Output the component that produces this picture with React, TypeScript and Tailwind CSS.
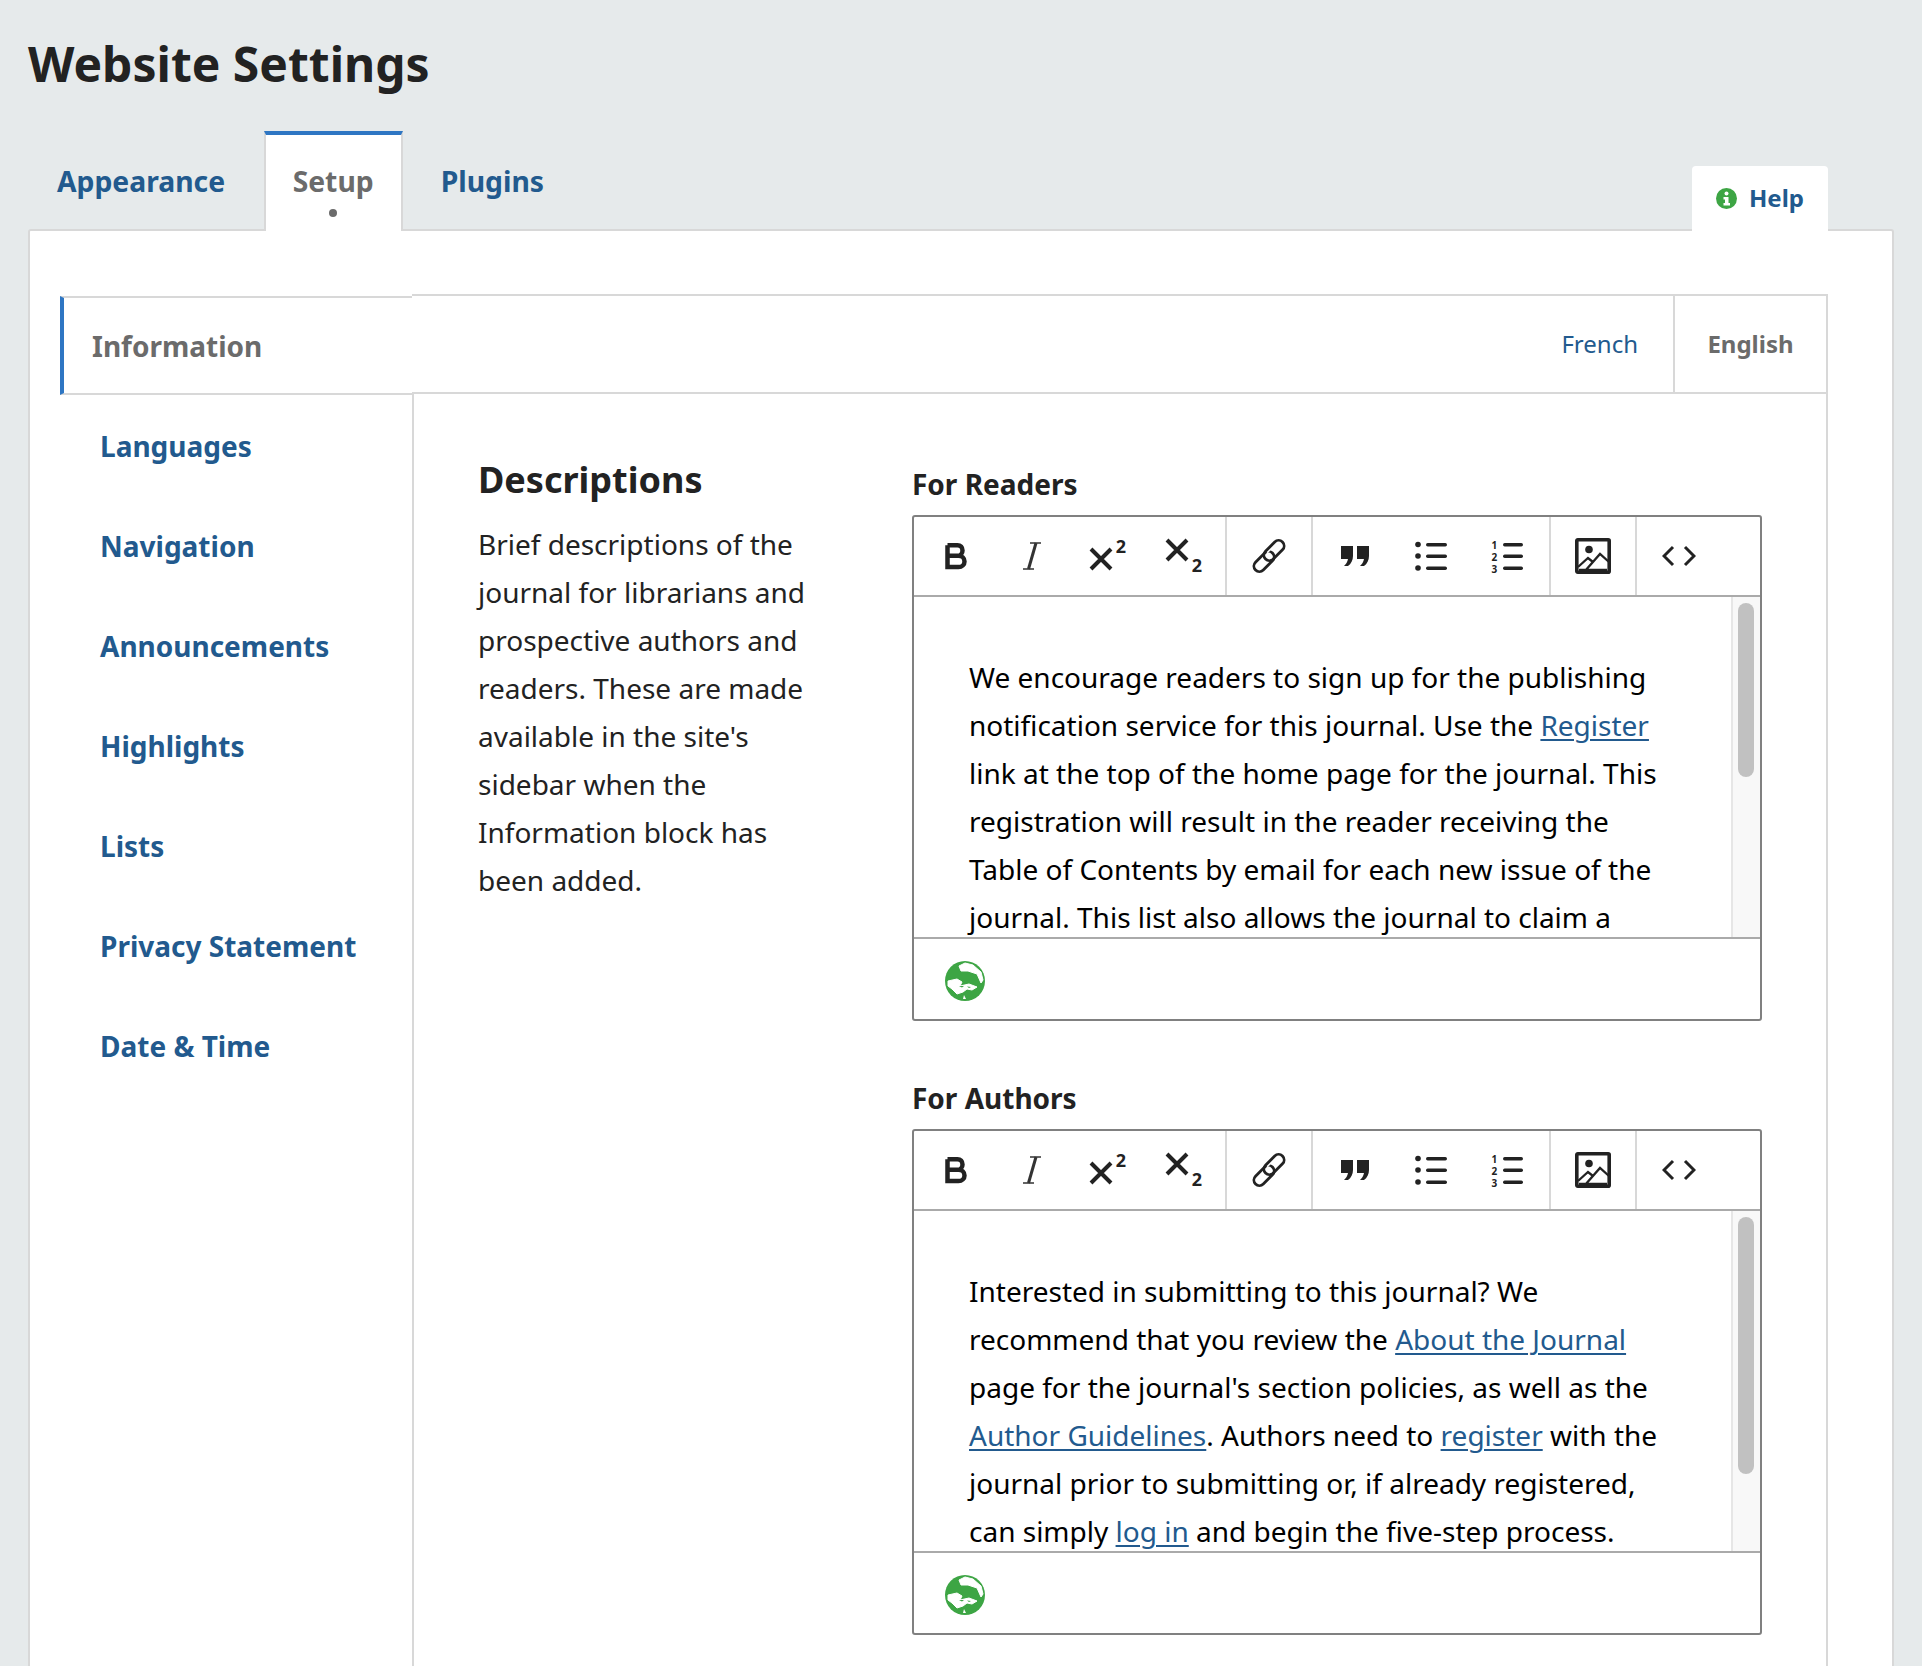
import React from 'react';

const sideItems = ['Languages', 'Navigation', 'Announcements', 'Highlights', 'Lists', 'Privacy Statement', 'Date & Time'];

const IconBold = () => (
  <svg width="24" height="28" viewBox="0 0 24 28" fill="none" stroke="#222" strokeWidth="4.500">
    <path d="M3.500 3.200V25h11c3.500 0 6-2.300 6-5.600s-2.500-5.600-6-5.600h-11M3.500 3.200h10c3 0 5 2 5 5.200s-2 5.400-5 5.400" />
  </svg>
);

const IconItalic = () => (
  <svg width="20" height="28" viewBox="0 0 20 28" fill="none" stroke="#333" strokeWidth="1.600">
    <path d="M8 1h11M1 27h11" />
    <path d="M14 1L6.500 27" strokeWidth="3" />
  </svg>
);

const IconSup = () => (
  <div className="relative h-[34px] w-[38px]">
    <svg className="absolute left-0 bottom-[2px]" width="24" height="24" viewBox="0 0 24 24" fill="none" stroke="#222" strokeWidth="4">
      <path d="M2 2l20 20M22 2L2 22" />
    </svg>
    <span className="absolute right-[1px] top-[-5px] text-[18px] leading-[24px] font-bold text-[#222]">2</span>
  </div>
);

const IconSub = () => (
  <div className="relative h-[34px] w-[38px]">
    <svg className="absolute left-0 top-[-1px]" width="24" height="24" viewBox="0 0 24 24" fill="none" stroke="#222" strokeWidth="4">
      <path d="M2 2l20 20M22 2L2 22" />
    </svg>
    <span className="absolute right-[1px] bottom-[-4px] text-[18px] leading-[24px] font-bold text-[#222]">2</span>
  </div>
);

const IconLink = () => (
  <svg width="36" height="36" viewBox="0 0 36 36" fill="none" stroke="#222" strokeWidth="2.800">
    <rect x="1" y="18" width="24" height="11" rx="5.500" transform="rotate(-45 13 23.500)" />
    <rect x="11" y="7" width="24" height="11" rx="5.500" transform="rotate(-45 23 12.500)" stroke="#fff" strokeWidth="6" strokeDasharray="24 60" />
    <rect x="11" y="7" width="24" height="11" rx="5.500" transform="rotate(-45 23 12.500)" />
  </svg>
);

const IconQuote = () => (
  <svg width="30" height="22" viewBox="0 0 30 22" fill="#222">
    <path d="M1 1h12v10c0 4-2 8-5 10H4c2-2 3.500-4 4-7H1zM17 1h12v10c0 4-2 8-5 10h-4c2-2 3.500-4 4-7h-7z" />
  </svg>
);

const IconBullets = () => (
  <svg width="32" height="30" viewBox="0 0 32 30" fill="#222">
    <circle cx="3" cy="3.500" r="2.800" />
    <circle cx="3" cy="15" r="2.800" />
    <circle cx="3" cy="27" r="2.800" />
    <rect x="11" y="2" width="21" height="3.400" rx="1.700" />
    <rect x="11" y="13.500" width="21" height="3.400" rx="1.700" />
    <rect x="11" y="25.500" width="21" height="3.400" rx="1.700" />
  </svg>
);

const IconNumbers = () => (
  <div className="relative h-[30px] w-[31px]">
    <div className="absolute left-0 top-[-2px] flex flex-col text-[10px] leading-[12px] font-bold text-[#222]">
      <span>1</span>
      <span>2</span>
      <span>3</span>
    </div>
    <svg className="absolute right-0 top-0" width="20" height="30" viewBox="0 0 20 30" fill="#222">
      <rect x="0" y="2" width="20" height="3.400" rx="1.700" />
      <rect x="0" y="13.500" width="20" height="3.400" rx="1.700" />
      <rect x="0" y="25.500" width="20" height="3.400" rx="1.700" />
    </svg>
  </div>
);

const IconImage = () => (
  <svg width="36" height="36" viewBox="0 0 36 36" fill="none" stroke="#222" strokeWidth="3.600">
    <rect x="1.800" y="1.800" width="32.400" height="32.400" rx="1" />
    <circle cx="14" cy="11.500" r="3.800" fill="#222" stroke="none" />
    <path d="M3 29l10-9 5 4M10 33l15-17 9 8M4 32h28" strokeWidth="2.300" />
  </svg>
);

const IconCode = () => (
  <svg width="34" height="22" viewBox="0 0 34 22" fill="none" stroke="#222" strokeWidth="3">
    <path d="M11 2L2 11l9 9M23 2l9 9-9 9" />
  </svg>
);

const IconHelp = () => (
  <svg className="mt-[7px] shrink-0" width="21" height="21" viewBox="0 0 21 21">
    <circle cx="10.500" cy="10.500" r="10.500" fill="#3da544" />
    <circle cx="10.500" cy="5.500" r="2" fill="#fff" />
    <path d="M7.500 9h5v6h1.500v2.500H7.500V15H9v-3.500H7.500z" fill="#fff" />
  </svg>
);

const Globe = () => (
  <svg width="40" height="40" viewBox="0 0 40 40">
    <circle cx="20" cy="20" r="20" fill="#3da544" />
    <path d="M14 5L20 2 28 4 36 11 38 19 36 22 32 13 23 10 16 10z" fill="#fff" stroke="#fff" strokeLinejoin="round" />
    <path d="M3 20L12 18 17 21 15 25 24 23 32 26 27 29 22 28 18 31 12 33 7 28 3 25z" fill="#fff" stroke="#fff" strokeLinejoin="round" />
    <path d="M15 27h5l-3 2zM19 34l2 4h-3z" fill="#fff" />
    <path d="M14 25l5 0-2 1.500zM22 25.500l4 .5-2 1z" fill="#3da544" />
  </svg>
);

const A = ({ children }: { children: React.ReactNode }) => (
  <a className="text-[#225a8e] underline underline-offset-[3px] decoration-[2px]">{children}</a>
);

const Editor = ({ label, thumbClass, children }: { label: string; thumbClass: string; children: React.ReactNode }) => (
  <div className="w-[850px]">
    <div className="mb-[12px] h-[38px] text-[28px] leading-[38px] font-bold text-[#222]">{label}</div>
    <div className="rounded-[3px] border-2 border-[#808080] bg-white">
      <div className="flex h-[80px] border-b-2 border-[#aaaaaa]">
        <div className="flex items-center border-r-2 border-[#d8d8d8] pl-[4px] pr-[3px]">
          <div className="flex w-[76px] justify-center"><IconBold /></div>
          <div className="flex w-[76px] justify-center"><IconItalic /></div>
          <div className="flex w-[76px] justify-center"><IconSup /></div>
          <div className="flex w-[76px] justify-center"><IconSub /></div>
        </div>
        <div className="flex items-center border-r-2 border-[#d8d8d8] px-[4px]">
          <div className="flex w-[76px] justify-center"><IconLink /></div>
        </div>
        <div className="flex items-center border-r-2 border-[#d8d8d8] px-[4px]">
          <div className="flex w-[76px] justify-center"><IconQuote /></div>
          <div className="flex w-[76px] justify-center"><IconBullets /></div>
          <div className="flex w-[76px] justify-center"><IconNumbers /></div>
        </div>
        <div className="flex items-center border-r-2 border-[#d8d8d8] px-[4px]">
          <div className="flex w-[76px] justify-center"><IconImage /></div>
        </div>
        <div className="flex items-center px-[4px]">
          <div className="flex w-[76px] justify-center"><IconCode /></div>
        </div>
      </div>
      <div className="flex h-[342px] border-b-2 border-[#aaaaaa]">
        <div className="flex-1 overflow-hidden pl-[55px] pr-[58px] pt-[56px] text-[28px] leading-[48px] text-black">
          {children}
        </div>
        <div className="w-[29px] border-l-2 border-[#e6e6e6] bg-[#f8f8f8] pl-[5px] pt-[6px]">
          <div className={`w-[16px] rounded-full bg-[#c1c1c1] ${thumbClass}`} />
        </div>
      </div>
      <div className="flex h-[80px] items-center pl-[31px] pt-[4px]">
        <Globe />
      </div>
    </div>
  </div>
);

export default function App() {
  return (
    <div className="h-[1666px] overflow-hidden bg-[#e6eaeb] px-[28px] font-['Noto_Sans',sans-serif]">
      <h1 className="pt-[32px] text-[48px] leading-[64px] font-bold text-[#222]">Website Settings</h1>

      {/* top tabs */}
      <div className="mt-[35px] flex h-[98px] items-end justify-between pr-[66px]">
        <div className="flex items-start">
          <div className="h-[96px] pl-[29px] pr-[26.500px] pt-[30px] text-[28.3px] leading-[40px] font-bold text-[#225a8e]">Appearance</div>
          <div className="relative -mb-[2px] ml-[12px] h-[100px] border-x-2 border-t-4 border-x-[#d8d8d8] border-t-[#2e76c3] bg-white px-[27px] pt-[26px] text-[28.3px] leading-[40px] font-bold text-[#6b6b6b]">
            Setup
            <span className="absolute bottom-[14px] left-1/2 h-[8px] w-[8px] -translate-x-1/2 rounded-full bg-[#6b6b6b]" />
          </div>
          <div className="ml-[10px] h-[96px] px-[28px] pt-[30px] text-[28.3px] leading-[40px] font-bold text-[#225a8e]">Plugins</div>
        </div>
        <div className="relative z-10 -mb-[2px] flex h-[65px] w-[136px] items-start gap-[12px] rounded-t-[4px] bg-white pl-[24px] pt-[15px] text-[24px] leading-[34px] font-bold text-[#225a8e]">
          <IconHelp />
          Help
        </div>
      </div>

      {/* panel */}
      <div className="h-[1500px] rounded-t-[3px] border-x-2 border-t-2 border-[#d8d8d8] bg-white pl-[30px] pr-[64px] pt-[63px]">
        <div className="flex h-[1430px]">
          <div className="relative z-10 w-[352px] shrink-0 pt-[2px]">
            <div className="flex h-[99px] items-center border-y-2 border-l-4 border-y-[#d8d8d8] border-l-[#2e76c3] bg-white pl-[28px] text-[28px] font-bold text-[#6b6b6b]">
              Information
            </div>
            {sideItems.map(item => (
              <div key={item} className="flex h-[100px] items-center pl-[40px] pt-[1px] text-[28px] font-bold text-[#225a8e]">
                {item}
              </div>
            ))}
          </div>

          <div className="flex flex-1 flex-col border-r-2 border-t-2 border-[#d8d8d8]">
            <div className="flex h-[98px] shrink-0 items-stretch justify-end border-b-2 border-[#d8d8d8]">
              <div className="flex items-center pr-[35px] text-[24px] text-[#225a8e]">French</div>
              <div className="flex w-[153px] items-center justify-center border-l-2 border-[#d8d8d8] text-[24px] font-bold text-[#6b6b6b]">English</div>
            </div>

            <div className="flex flex-1 border-l-2 border-[#d8d8d8] pl-[64px] pt-[63px]">
              <div className="w-[434px] shrink-0">
                <h2 className="text-[36px] leading-[46px] font-bold text-[#222]">Descriptions</h2>
                <p className="mt-[17px] w-[340px] text-[28px] leading-[48px] text-[#222]">
                  Brief descriptions of the journal for librarians and prospective authors and readers. These are made available in the site's sidebar when the Information block has been added.
                </p>
              </div>
              <div className="flex flex-col gap-[58px] pt-[8px]">
                <Editor label="For Readers" thumbClass="h-[174px]">
                  We encourage readers to sign up for the publishing notification service for this journal. Use the <A>Register</A> link at the top of the home page for the journal. This registration will result in the reader receiving the Table of Contents by email for each new issue of the journal. This list also allows the journal to claim a
                </Editor>
                <Editor label="For Authors" thumbClass="h-[257px]">
                  Interested in submitting to this journal? We recommend that you review the <A>About the Journal</A> page for the journal's section policies, as well as the <A>Author Guidelines</A>. Authors need to <A>register</A> with the journal prior to submitting or, if already registered, can simply <A>log in</A> and begin the five-step process.
                </Editor>
              </div>
            </div>
          </div>
        </div>
      </div>
    </div>
  );
}
